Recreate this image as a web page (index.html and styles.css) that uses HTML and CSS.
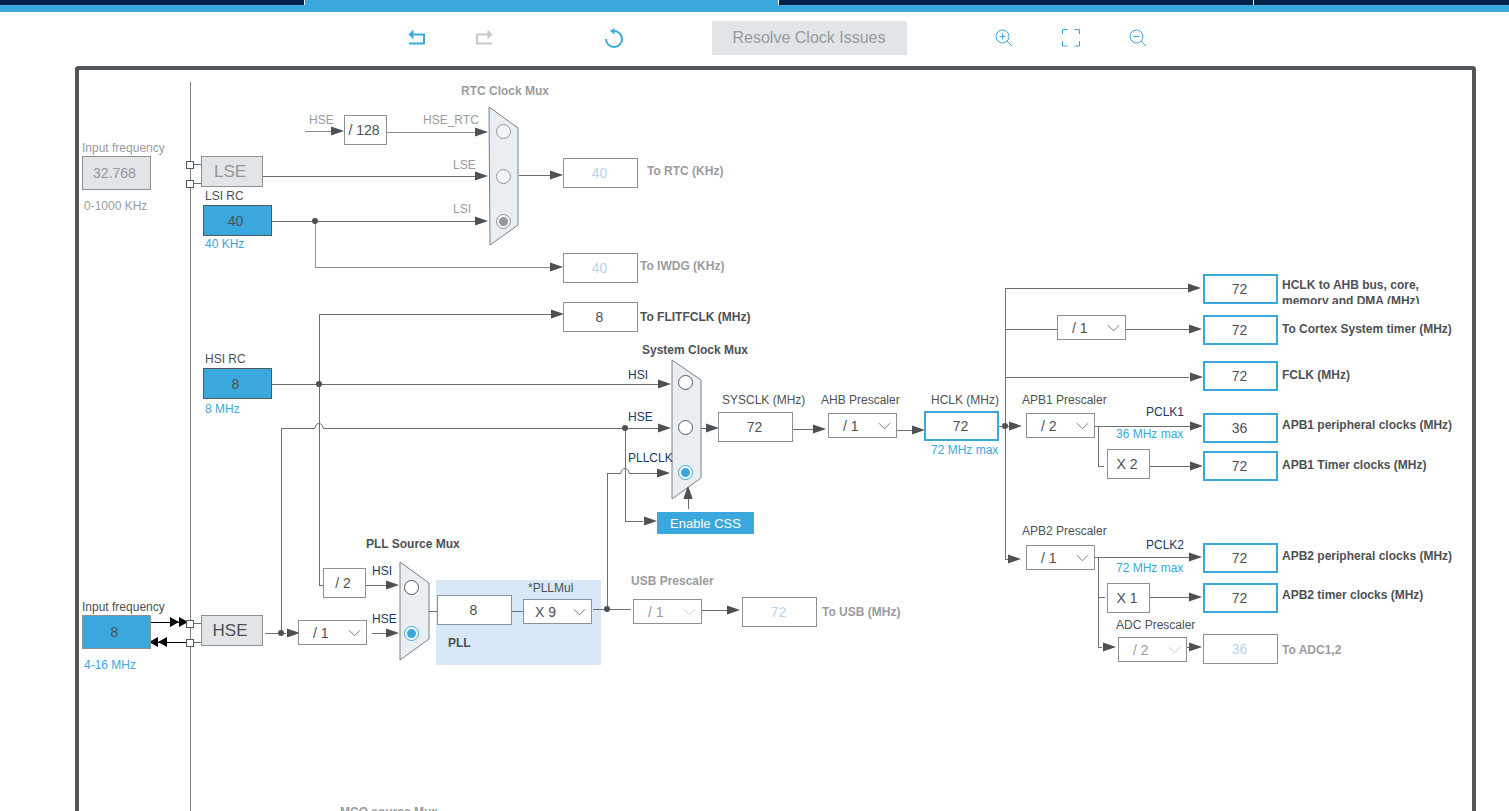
FILE: index.html
```html
<!DOCTYPE html>
<html lang="en">
<head>
<meta charset="utf-8">
<title>Clock Configuration</title>
<link rel="stylesheet" href="styles.css">
</head>
<body>
<nav class="tabs" aria-label="Views">
  <button class="tab tab-first" type="button" aria-label="Pinout"></button>
  <button class="tab tab-wide tab-active" type="button" aria-label="Clock"></button>
  <button class="tab tab-wide" type="button" aria-label="Project"></button>
  <button class="tab tab-last" type="button" aria-label="Tools"></button>
</nav>
<header class="toolbar">
  <div class="tools history">
    <button class="tool" type="button" aria-label="Undo"><svg width="20" height="20" viewBox="0 0 20 20"><path d="M2 15.500H17V6.500H5" stroke-width="2"/><path d="M6.500 1.500V11.500L1.500 6.500Z" fill="currentColor" stroke="none"/></svg></button>
    <button class="tool tool-off" type="button" aria-label="Redo" disabled><svg width="20" height="20" viewBox="0 0 20 20"><path d="M18 15.500H3V6.500H14" stroke-width="2"/><path d="M13.500 1.500V11.500L18.500 6.500Z" fill="currentColor" stroke="none"/></svg></button>
  </div>
  <button class="tool" type="button" aria-label="Reset"><svg width="20" height="20" viewBox="0 0 20 20"><path d="M8 3H10A8 8 0 1 1 2 11" stroke-width="2"/><path d="M10.500 0V6.500L6 3Z" fill="currentColor" stroke="none"/></svg></button>
  <button class="resolve" type="button" disabled>Resolve Clock Issues</button>
  <div class="tools zooms">
    <button class="tool" type="button" aria-label="Zoom in"><svg width="20" height="20" viewBox="0 0 20 20"><circle cx="8.500" cy="8.500" r="6.500"/><path d="M13 13L18 18M5.500 8.500H11.500M8.500 5.500V11.500"/></svg></button>
    <button class="tool" type="button" aria-label="Fit"><svg width="20" height="20" viewBox="0 0 20 20"><path d="M1.500 6V1.500H6.500M13.500 1.500H18.500V6M18.500 13V18H13.500M6.500 18H1.500V13"/></svg></button>
    <button class="tool" type="button" aria-label="Zoom out"><svg width="20" height="20" viewBox="0 0 20 20"><circle cx="8.500" cy="8.500" r="6.500"/><path d="M13 13L18 18M5.500 8.500H11.500"/></svg></button>
  </div>
</header>
<main class="board">
  <svg class="wiring" viewBox="79 70 1393 745" width="1393" height="745" aria-hidden="true">
    <defs>
      <marker id="tip" markerUnits="userSpaceOnUse" markerWidth="14" markerHeight="10" refX="13" refY="5" orient="auto"><path class="arrow" d="M0 0.500L13 5L0 9.500Z"/></marker>
    </defs>
    <rect class="pll-area" x="436" y="580" width="165" height="85"/>
    <g class="wire">
      <path class="edge" d="M190 82V815"/>
      <path d="M190 164H201M190 183H201M190 623H201M190 642H201"/>
      <path class="soft" d="M305 131H331M387 132H475M315 221V267H550"/>
      <path d="M263 176H475M272 221H475M519 175H550"/>
      <path d="M319 585V314H551M272 384H658M319 585H323"/>
      <path d="M281 633V428H315M323 428H658M625 428V521H643"/>
      <path d="M607 610V473H621M629 473H657"/>
      <path d="M701 428H706M793 429H813M897 430H912M999 426H1010"/>
      <path d="M1005 559V288H1188M1005 329H1057M1125 329H1189M1005 377H1189M1005 559H1008"/>
      <path d="M1094 426H1190M1098 426V466H1104M1149 466H1190"/>
      <path d="M1094 557H1189M1098 557V647H1102M1098 597H1105M1149 597H1189M1187 647H1189"/>
      <path d="M265 633H286M366 585H386M372 633H386M429 611H437M512 611H523M593 609H631M702 610H727M688 509V499"/>
    </g>
    <g class="hop"><path d="M315 428C315 422 323 422 323 428M621 473C621 467 629 467 629 473"/></g>
    <g class="tips">
      <path d="M325 131H344"/><path d="M470 132H488"/><path d="M470 176H488"/><path d="M470 221H488"/><path d="M545 175H563"/><path d="M545 267H563"/><path d="M545 314H564"/>
      <path d="M654 384H671"/><path d="M654 428H671"/><path d="M653 473H670"/><path d="M640 521H657"/><path d="M688 506V486"/>
      <path d="M703 428H719"/><path d="M810 429H826"/><path d="M908 430H925"/><path d="M1008 426H1022"/><path d="M1006 559H1021"/>
      <path d="M1185 288H1201"/><path d="M1186 329H1202"/><path d="M1186 377H1203"/><path d="M1186 426H1203"/><path d="M1186 466H1203"/><path d="M1186 557H1202"/><path d="M1186 597H1202"/><path d="M1187 647H1202"/><path d="M1100 647H1116"/>
      <path d="M284 633H300"/><path d="M383 585H399"/><path d="M383 633H399"/><path d="M723 610H740"/>
    </g>
    <g class="dots"><circle cx="315" cy="221" r="3"/><circle cx="319" cy="384" r="3"/><circle cx="625" cy="428" r="3"/><circle cx="281" cy="633" r="3"/><circle cx="607" cy="609" r="3"/><circle cx="1005" cy="426" r="3"/></g>
    <g class="osc"><path class="lead" d="M151 622H186M186 642H151"/><path d="M170 617L179 622L170 627ZM179 617L188 622L179 627ZM167 637L158 642L167 647ZM158 637L149 642L158 647Z"/></g>
    <g class="pins"><rect x="186" y="161" width="7" height="7"/><rect x="186" y="180" width="7" height="7"/><rect x="186" y="620" width="7" height="7"/><rect x="186" y="639" width="7" height="7"/></g>
    <g class="mux"><path d="M489 107L518 128V225L490 245Z"/><path d="M672 360L701 380V478L672 499Z"/><path d="M400 562L429 583V639L400 660Z"/></g>
    <g class="tips"><path d="M688 506V486"/></g>
  </svg>

  <!-- LSE, LSI and HSI sources -->
  <label class="text muted lse-in-label" for="lse-in">Input frequency</label>
  <input class="field source off lse-in" id="lse-in" value="32.768" disabled>
  <span class="text muted lse-range">0-1000 KHz</span>
  <button class="node part off lse" type="button" disabled>LSE</button>
  <label class="text lsi-label" for="lsi">LSI RC</label>
  <input class="field rc lsi" id="lsi" value="40" readonly>
  <span class="text blue lsi-range">40 KHz</span>
  <label class="text hsi-label" for="hsi">HSI RC</label>
  <input class="field rc hsi" id="hsi" value="8" readonly>
  <span class="text blue hsi-range">8 MHz</span>
  <label class="text hse-in-label" for="hse-in">Input frequency</label>
  <input class="field source hse-in" id="hse-in" value="8">
  <span class="text blue hse-range">4-16 MHz</span>
  <button class="node part hse" type="button">HSE</button>

  <!-- RTC clock mux -->
  <span class="text muted rtc-hse">HSE</span>
  <div class="node factor div128">/ 128</div>
  <span class="text muted strong rtc-title">RTC Clock Mux</span>
  <label class="text muted rtc-a-label" for="rtc-a">HSE_RTC</label>
  <label class="text muted rtc-b-label" for="rtc-b">LSE</label>
  <label class="text muted rtc-c-label" for="rtc-c">LSI</label>
  <input class="radio rtc-a" type="radio" name="rtc" id="rtc-a" disabled>
  <input class="radio rtc-b" type="radio" name="rtc" id="rtc-b" disabled>
  <input class="radio rtc-c" type="radio" name="rtc" id="rtc-c" checked disabled>
  <input class="field idle rtc-out" id="rtc-out" value="40" disabled>
  <label class="text muted strong rtc-out-label" for="rtc-out">To RTC (KHz)</label>
  <input class="field idle iwdg" id="iwdg" value="40" disabled>
  <label class="text muted strong iwdg-label" for="iwdg">To IWDG (KHz)</label>
  <input class="field flitf" id="flitf" value="8" readonly>
  <label class="text strong flitf-label" for="flitf">To FLITFCLK (MHz)</label>

  <!-- PLL -->
  <div class="node factor div2">/ 2</div>
  <div class="pick hse-div"><select aria-label="HSE divider"><option>/ 1</option></select><svg class="chev" viewBox="0 0 14 8"><path d="M1 1L7 7L13 1"/></svg></div>
  <span class="text strong pll-title">PLL Source Mux</span>
  <label class="text navy pll-a-label" for="pll-a">HSI</label>
  <label class="text navy pll-b-label" for="pll-b">HSE</label>
  <input class="radio pll-a" type="radio" name="pll" id="pll-a">
  <input class="radio pll-b" type="radio" name="pll" id="pll-b" checked>
  <input class="field pll-in" id="pll-in" value="8" readonly>
  <label class="text strong pll-label" for="pll-in">PLL</label>
  <label class="text mul-label" for="mul">*PLLMul</label>
  <div class="pick mul"><select id="mul"><option>X 9</option></select><svg class="chev" viewBox="0 0 14 8"><path d="M1 1L7 7L13 1"/></svg></div>
  <label class="text muted strong usb-label" for="usb-div">USB Prescaler</label>
  <div class="pick pick-off usb-div"><select id="usb-div" disabled><option>/ 1</option></select><svg class="chev" viewBox="0 0 14 8"><path d="M1 1L7 7L13 1"/></svg></div>
  <input class="field idle usb" id="usb" value="72" disabled>
  <label class="text muted strong usb-out-label" for="usb">To USB (MHz)</label>

  <!-- System clock -->
  <span class="text strong sys-title">System Clock Mux</span>
  <label class="text navy sys-a-label" for="sys-a">HSI</label>
  <label class="text navy sys-b-label" for="sys-b">HSE</label>
  <label class="text navy sys-c-label" for="sys-c">PLLCLK</label>
  <input class="radio sys-a" type="radio" name="sys" id="sys-a">
  <input class="radio sys-b" type="radio" name="sys" id="sys-b">
  <input class="radio sys-c" type="radio" name="sys" id="sys-c" checked>
  <button class="css-button" type="button">Enable CSS</button>
  <label class="text sysclk-label" for="sysclk">SYSCLK (MHz)</label>
  <input class="field sysclk" id="sysclk" value="72" readonly>
  <label class="text ahb-label" for="ahb">AHB Prescaler</label>
  <div class="pick ahb"><select id="ahb"><option>/ 1</option></select><svg class="chev" viewBox="0 0 14 8"><path d="M1 1L7 7L13 1"/></svg></div>
  <label class="text hclk-label" for="hclk">HCLK (MHz)</label>
  <input class="field live hclk" id="hclk" value="72">
  <span class="text blue hclk-max">72 MHz max</span>

  <!-- Bus clocks -->
  <input class="field live out row1" id="o1" value="72"><label class="text strong out-label bus-label" for="o1">HCLK to AHB bus, core,<br>memory and DMA (MHz)</label>
  <div class="pick cortex"><select aria-label="Cortex prescaler"><option>/ 1</option></select><svg class="chev" viewBox="0 0 14 8"><path d="M1 1L7 7L13 1"/></svg></div>
  <input class="field live out row2" id="o2" value="72"><label class="text strong out-label row2-label" for="o2">To Cortex System timer (MHz)</label>
  <input class="field live out row3" id="o3" value="72"><label class="text strong out-label row3-label" for="o3">FCLK (MHz)</label>
  <label class="text apb1-label" for="apb1">APB1 Prescaler</label>
  <div class="pick apb1"><select id="apb1"><option>/ 2</option></select><svg class="chev" viewBox="0 0 14 8"><path d="M1 1L7 7L13 1"/></svg></div>
  <span class="text navy pclk1">PCLK1</span>
  <span class="text blue pclk1-max">36 MHz max</span>
  <input class="field live out row4" id="o4" value="36"><label class="text strong out-label row4-label" for="o4">APB1 peripheral clocks (MHz)</label>
  <div class="node factor x2">X 2</div>
  <input class="field live out row5" id="o5" value="72"><label class="text strong out-label row5-label" for="o5">APB1 Timer clocks (MHz)</label>
  <label class="text apb2-label" for="apb2">APB2 Prescaler</label>
  <div class="pick apb2"><select id="apb2"><option>/ 1</option></select><svg class="chev" viewBox="0 0 14 8"><path d="M1 1L7 7L13 1"/></svg></div>
  <span class="text navy pclk2">PCLK2</span>
  <span class="text blue pclk2-max">72 MHz max</span>
  <input class="field live out row6" id="o6" value="72"><label class="text strong out-label row6-label" for="o6">APB2 peripheral clocks (MHz)</label>
  <div class="node factor x1">X 1</div>
  <input class="field live out row7" id="o7" value="72"><label class="text strong out-label row7-label" for="o7">APB2 timer clocks (MHz)</label>
  <label class="text adc-label" for="adc">ADC Prescaler</label>
  <div class="pick pick-off adc"><select id="adc" disabled><option>/ 2</option></select><svg class="chev" viewBox="0 0 14 8"><path d="M1 1L7 7L13 1"/></svg></div>
  <input class="field idle out row8" id="o8" value="36" disabled><label class="text muted strong out-label row8-label" for="o8">To ADC1,2</label>

  <span class="text muted strong mco-title">MCO source Mux</span>
</main>
</body>
</html>
```
FILE: styles.css
```css
* { box-sizing: border-box; }
body {
  margin: 0;
  height: 100vh;
  display: flex;
  flex-direction: column;
  overflow: hidden;
  background: #fff;
  color: #4d5154;
  font-family: "Liberation Sans", Arial, sans-serif;
  font-size: 12px;
}
button, input, select { font: inherit; color: inherit; margin: 0; padding: 0; border: 0; border-radius: 0; background: none; }

/* Tab strip */
.tabs { display: flex; flex: none; height: 12px; border-bottom: 7px solid #3aa8dc; background: #03234b; }
.tab { border-right: 1px solid #e6f0f6; }
.tab-first { flex: 305; }
.tab-wide { flex: 474; }
.tab-last { flex: 256; border-right: 0; }
.tab-active { background: #3aa8dc; border-right-color: #fff; }

/* Toolbar */
.toolbar { flex: none; display: flex; align-items: center; justify-content: center; height: 54px; padding-right: 10px; padding-bottom: 2px; }
.tools { display: flex; }
.history { gap: 47px; margin-right: 110px; margin-left: 55px; }
.zooms { gap: 47px; margin-left: 87px; }
.tool { width: 20px; height: 20px; color: #3aa8dc; }
.tool svg { display: block; fill: none; stroke: currentColor; }
.tool-off { color: #c9c9c9; }
.resolve { margin-left: 88px; width: 195px; height: 34px; background: #e1e5e8; color: #969b9f; font-size: 16px; }

/* Diagram canvas */
.board { position: relative; flex: 1; margin: 0 33px 0 75px; border: 4px solid #525659; border-bottom: 0; border-radius: 4px 4px 0 0; overflow: hidden; }
.wiring { position: absolute; left: 0; top: 0; }
.wire { fill: none; stroke: #6a6e71; shape-rendering: crispEdges; }
.wire .soft { stroke: #8b8f91; }
.wire .edge { stroke: #7c8083; }
.hop { fill: none; stroke: #6a6e71; }
.tips path { fill: none; stroke: none; marker-end: url(#tip); }
.arrow { fill: #4d5154; }
.dots { fill: #4d5154; }
.osc { fill: #000; }
.lead { stroke: #000; shape-rendering: crispEdges; }
.pins { fill: #fff; stroke: #55595c; shape-rendering: crispEdges; }
.mux { fill: #e9eef2; stroke: #7a8085; }
.pll-area { fill: #d8e8f6; }

.text { position: absolute; line-height: 16px; white-space: nowrap; }
.strong { font-weight: bold; }
.muted { color: #999c9e; }
.blue { color: #3aa8dc; }
.navy { color: #173a63; }

.field, .node, .pick, .radio, .css-button { position: absolute; }
.field { width: 75px; height: 30px; padding-right: 2px; border: 1px solid #8a9299; background: #fff; text-align: center; font-size: 14px; }
.live { border: 2px solid #3aa8dc; }
.idle { color: #b9d3ea; }
.source, .rc { width: 69px; padding-right: 4px; background: #3aa8dc; }
.source { height: 34px; }
.rc { height: 31px; border-color: #4d5a60; }
.off { background: #e1e5e8; color: #92989d; }
.node { display: flex; align-items: center; justify-content: center; border: 1px solid #8a9299; }
.part { width: 62px; height: 31px; padding-right: 4px; background: #e1e5e8; font-size: 17px; }
.part.off { color: #92989d; }
.factor { width: 43px; height: 30px; padding-right: 3px; background: #fff; font-size: 14px; }
.pick { width: 69px; height: 25px; }
.pick select { width: 100%; height: 100%; appearance: none; border: 1px solid #8a9299; background: #fff; padding-left: 14px; font-size: 14px; opacity: 1; }
.mul select { padding-left: 11px; }
.pick-off { color: #999c9e; }
.chev { position: absolute; right: 6px; top: 9px; width: 13px; height: 8px; fill: none; stroke: #6a6e71; pointer-events: none; }
.pick-off .chev { stroke: #c4c8ca; }
.radio { appearance: none; width: 15px; height: 15px; border: 1px solid #55595c; border-radius: 50%; background: #fff; }
.radio:disabled { border-color: #92989d; background: #f2f4f6; }
.radio:checked { border-color: #3aa8dc; background: radial-gradient(circle, #3aa8dc 0 4px, #fff 5px); }
.radio:checked:disabled { border-color: #92989d; background: radial-gradient(circle, #92989d 0 4px, #f2f4f6 5px); }
.css-button { width: 97px; height: 22px; background: #3aa8dc; color: #fff; font-size: 13px; }

/* Canvas placement: sources */
.lse-in-label { left: 3px; top: 70px; }
.lse-in { left: 3px; top: 86px; }
.lse-range { left: 5px; top: 128px; }
.lse { left: 122px; top: 86px; }
.lsi-label { left: 126px; top: 118px; }
.lsi { left: 124px; top: 135px; }
.lsi-range { left: 126px; top: 166px; }
.hsi-label { left: 126px; top: 281px; }
.hsi { left: 124px; top: 298px; }
.hsi-range { left: 126px; top: 331px; }
.hse-in-label { left: 3px; top: 529px; }
.hse-in { left: 3px; top: 545px; }
.hse-range { left: 5px; top: 587px; }
.hse { left: 122px; top: 545px; }

/* Canvas placement: RTC mux */
.rtc-hse { left: 230px; top: 42px; }
.div128 { left: 265px; top: 45px; }
.rtc-title { left: 382px; top: 13px; }
.rtc-a-label { left: 344px; top: 42px; }
.rtc-b-label { left: 374px; top: 87px; }
.rtc-c-label { left: 374px; top: 131px; }
.rtc-a, .rtc-b, .rtc-c { left: 417px; }
.rtc-a { top: 54px; }
.rtc-b { top: 99px; }
.rtc-c { top: 144px; }
.rtc-out, .iwdg, .flitf { left: 484px; }
.rtc-out { top: 88px; }
.iwdg { top: 183px; }
.flitf { top: 232px; }
.rtc-out-label { left: 568px; top: 93px; }
.iwdg-label { left: 561px; top: 188px; }
.flitf-label { left: 561px; top: 239px; }

/* Canvas placement: PLL */
.div2 { left: 244px; top: 498px; }
.hse-div { left: 219px; top: 550px; }
.pll-title { left: 287px; top: 466px; }
.pll-a-label { left: 293px; top: 493px; }
.pll-b-label { left: 293px; top: 541px; }
.pll-a, .pll-b { left: 325px; }
.pll-a { top: 510px; }
.pll-b { top: 556px; }
.pll-in { left: 358px; top: 525px; }
.pll-label { left: 369px; top: 565px; }
.mul-label { left: 449px; top: 510px; }
.mul { left: 444px; top: 529px; }
.usb-label { left: 552px; top: 503px; }
.usb-div { left: 554px; top: 529px; }
.usb { left: 663px; top: 527px; }
.usb-out-label { left: 743px; top: 534px; }

/* Canvas placement: system clock */
.sys-title { left: 563px; top: 272px; }
.sys-a-label { left: 549px; top: 297px; }
.sys-b-label { left: 549px; top: 339px; }
.sys-c-label { left: 549px; top: 380px; }
.sys-a, .sys-b, .sys-c { left: 599px; }
.sys-a { top: 305px; }
.sys-b { top: 350px; }
.sys-c { top: 395px; }
.css-button { left: 578px; top: 442px; }
.sysclk-label { left: 643px; top: 322px; }
.sysclk { left: 639px; top: 342px; }
.ahb-label { left: 742px; top: 322px; }
.ahb { left: 749px; top: 343px; }
.hclk-label { left: 852px; top: 322px; }
.hclk { left: 845px; top: 341px; }
.hclk-max { left: 852px; top: 372px; }

/* Canvas placement: bus clocks */
.out { left: 1124px; }
.out-label { left: 1203px; }
.row1 { top: 204px; }
.row2 { top: 245px; }
.row3 { top: 291px; }
.row4 { top: 343px; }
.row5 { top: 381px; }
.row6 { top: 473px; }
.row7 { top: 513px; }
.row8 { top: 564px; }
.bus-label { top: 207px; height: 27px; overflow: hidden; }
.row2-label { top: 251px; }
.row3-label { top: 297px; }
.row4-label { top: 347px; }
.row5-label { top: 387px; }
.row6-label { top: 478px; }
.row7-label { top: 517px; }
.row8-label { top: 572px; }
.cortex { left: 978px; top: 245px; }
.apb1-label { left: 943px; top: 322px; }
.apb1 { left: 947px; top: 343px; }
.pclk1 { left: 1067px; top: 334px; }
.pclk1-max { left: 1037px; top: 356px; }
.x2 { left: 1028px; top: 379px; }
.apb2-label { left: 943px; top: 453px; }
.apb2 { left: 947px; top: 475px; }
.pclk2 { left: 1067px; top: 467px; }
.pclk2-max { left: 1037px; top: 490px; }
.x1 { left: 1028px; top: 513px; }
.adc-label { left: 1037px; top: 547px; }
.adc { left: 1039px; top: 567px; }
.mco-title { left: 261px; top: 734px; }
```
